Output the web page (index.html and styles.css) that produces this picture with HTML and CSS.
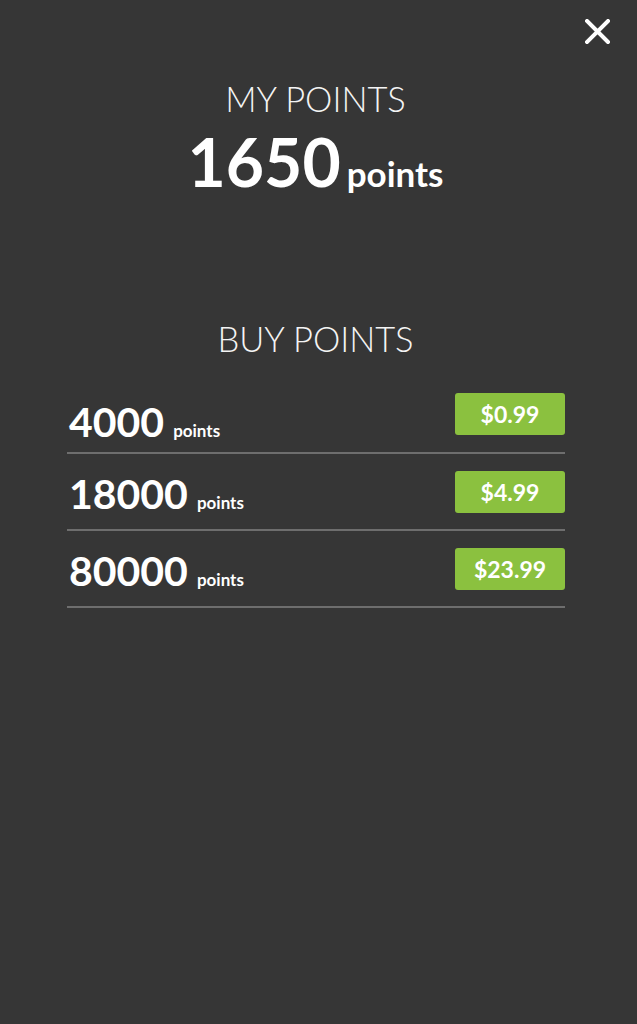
FILE: index.html
```html
<!DOCTYPE html>
<html>
  <head>
    <meta charset="utf-8">
    <link rel="stylesheet" href="styles.css">
  </head>
  <body>
    <a class="close" href="#">
      <svg width="25" height="25" viewBox="0 0 25 25">
        <path d="M2 2 L23 23 M23 2 L2 23" stroke="#fff" stroke-width="4" stroke-linecap="square"/>
      </svg>
    </a>
    <div id="main">
      <h2 class="heading">MY POINTS</h2>
      <div class="balance">1650<span class="unit">points</span></div>

      <h2 class="heading buy">BUY POINTS</h2>
      <ul class="packs">
        <li class="pack">
          <span class="pack-amount">4000<span class="unit">points</span></span>
          <a class="price" href="#">$0.99</a>
        </li>
        <li class="pack">
          <span class="pack-amount">18000<span class="unit">points</span></span>
          <a class="price" href="#">$4.99</a>
        </li>
        <li class="pack">
          <span class="pack-amount">80000<span class="unit">points</span></span>
          <a class="price" href="#">$23.99</a>
        </li>
      </ul>
    </div>
  </body>
</html>
```

FILE: styles.css
```css
html, body {
  margin: 0;
  padding: 0;
  height: 100%;
  background: #363636;
  color: #fff;
  font-family: Lato, "Open Sans", sans-serif;
}

.close {
  position: absolute;
  top: 19px;
  right: 27px;
  display: block;
  width: 25px;
  height: 25px;
}

.close svg {
  display: block;
}

#main {
  padding: 80px 6px 0 0;
  text-align: center;
}

.heading {
  margin: 0;
  font-size: 34.5px;
  font-weight: 300;
  line-height: 38px;
  color: #f4f4f4;
}

.balance {
  margin-top: 11px;
  font-size: 66px;
  font-weight: 700;
  line-height: 65px;
}

.balance .unit {
  margin-left: 6px;
  font-size: 35px;
  line-height: 1;
}

.buy {
  margin-top: 126px;
}

.packs {
  list-style: none;
  margin: 18px 0 0 67px;
  padding: 0;
  width: 498px;
  text-align: left;
}

.pack {
  display: flex;
  justify-content: space-between;
  align-items: center;
  height: 75px;
  border-bottom: 2px solid #6e6e6e;
}

.pack:first-child {
  height: 76px;
}

.pack-amount {
  padding-top: 5px;
  padding-left: 2px;
  font-size: 41px;
  font-weight: 700;
  line-height: 40px;
}

.pack:first-child .pack-amount {
  padding-top: 16px;
}

.pack-amount .unit {
  margin-left: 9px;
  font-size: 17px;
  line-height: 1;
}

.price {
  display: flex;
  align-items: center;
  justify-content: center;
  width: 110px;
  height: 42px;
  border-radius: 3px;
  background: #8bc13f;
  color: #fff;
  font-size: 23px;
  font-weight: 700;
  text-decoration: none;
}
```
